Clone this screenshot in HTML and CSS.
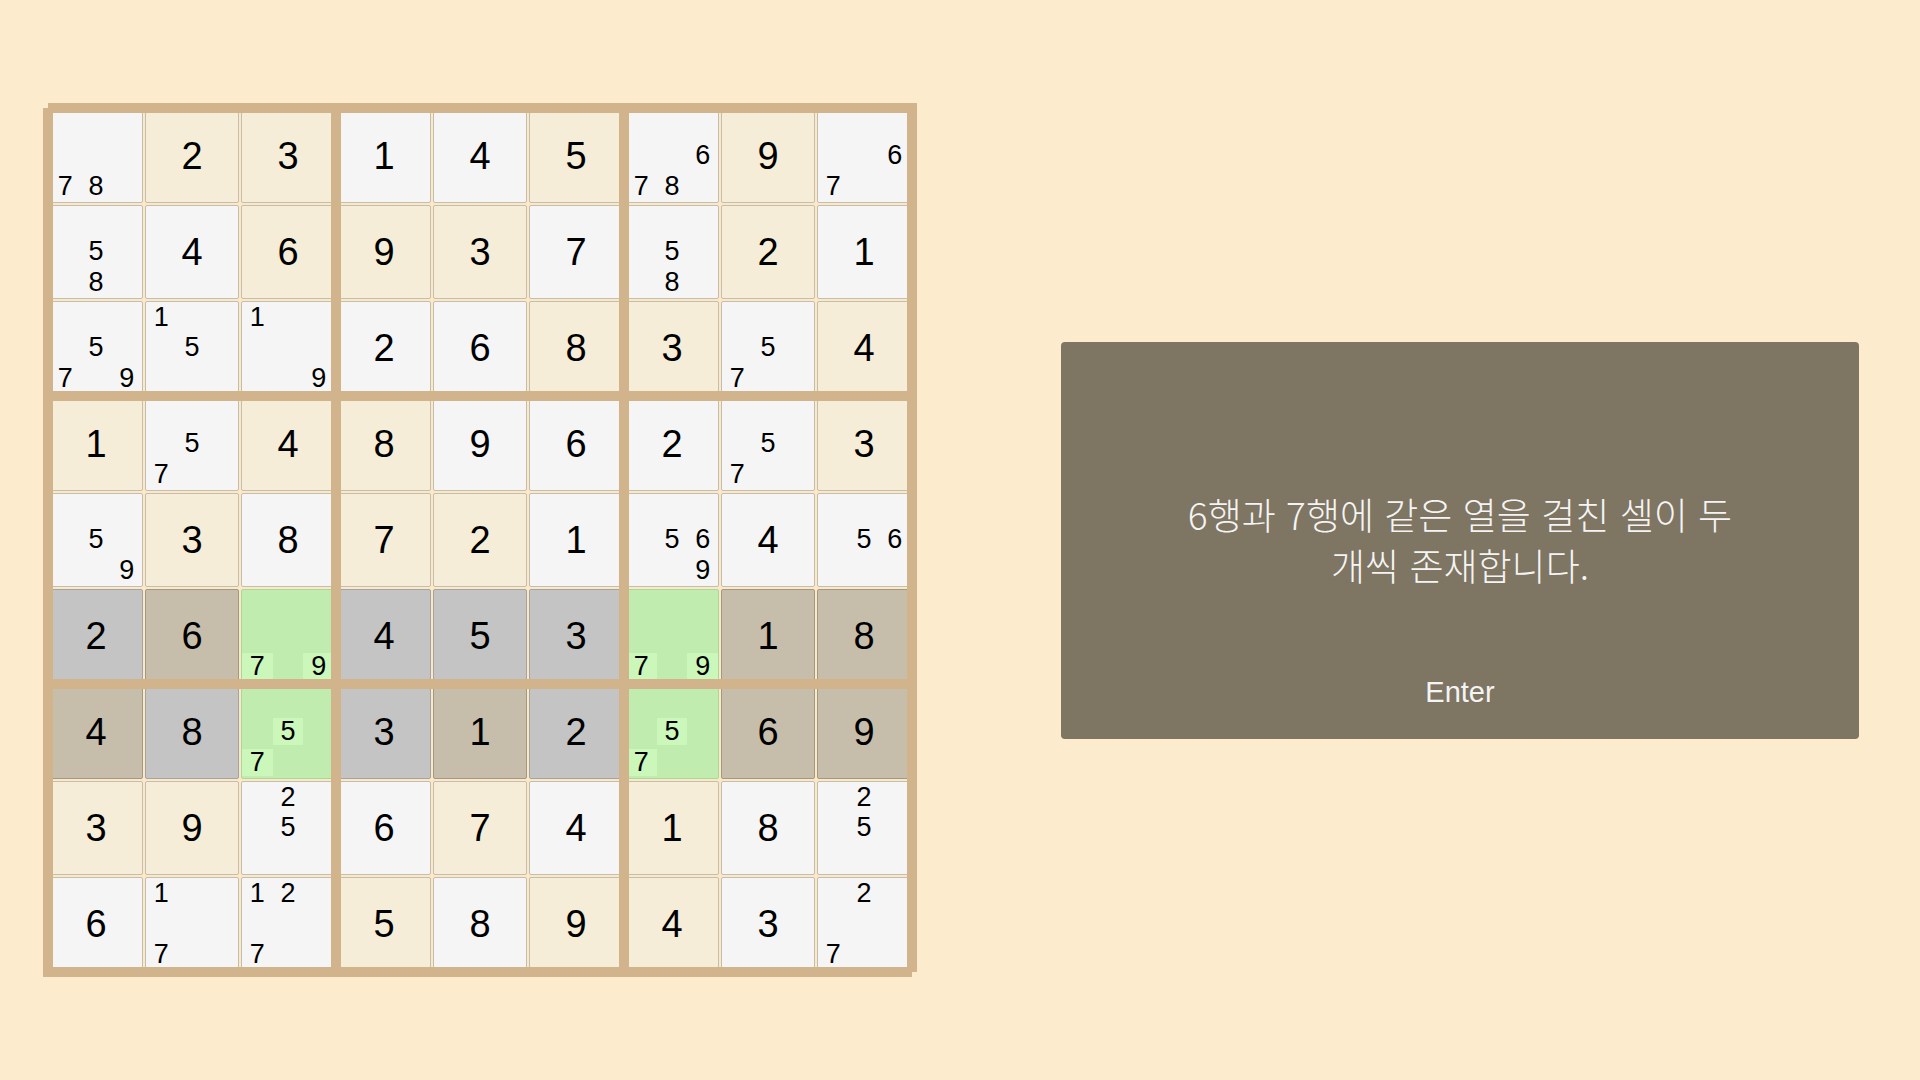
FILE: index.html
```html
<!DOCTYPE html>
<html lang="ko">
<head>
<meta charset="utf-8">
<title>Sudoku</title>
<link rel="stylesheet" href="styles.css">
</head>
<body>
<main class="page">
  <section class="board-area">
    <div class="board">
      <!-- row 1 -->
      <div class="cell w notes"><span class="n7">7</span><span class="n8">8</span></div>
      <div class="cell c">2</div>
      <div class="cell c">3</div>
      <div class="cell w">1</div>
      <div class="cell w">4</div>
      <div class="cell c">5</div>
      <div class="cell w notes"><span class="n6">6</span><span class="n7">7</span><span class="n8">8</span></div>
      <div class="cell c">9</div>
      <div class="cell w notes"><span class="n6">6</span><span class="n7">7</span></div>
      <!-- row 2 -->
      <div class="cell w notes"><span class="n5">5</span><span class="n8">8</span></div>
      <div class="cell w">4</div>
      <div class="cell c">6</div>
      <div class="cell c">9</div>
      <div class="cell c">3</div>
      <div class="cell w">7</div>
      <div class="cell w notes"><span class="n5">5</span><span class="n8">8</span></div>
      <div class="cell c">2</div>
      <div class="cell w">1</div>
      <!-- row 3 -->
      <div class="cell w notes"><span class="n5">5</span><span class="n7">7</span><span class="n9">9</span></div>
      <div class="cell w notes"><span class="n1">1</span><span class="n5">5</span></div>
      <div class="cell w notes"><span class="n1">1</span><span class="n9">9</span></div>
      <div class="cell w">2</div>
      <div class="cell w">6</div>
      <div class="cell c">8</div>
      <div class="cell c">3</div>
      <div class="cell w notes"><span class="n5">5</span><span class="n7">7</span></div>
      <div class="cell c">4</div>
      <!-- row 4 -->
      <div class="cell c">1</div>
      <div class="cell w notes"><span class="n5">5</span><span class="n7">7</span></div>
      <div class="cell c">4</div>
      <div class="cell c">8</div>
      <div class="cell w">9</div>
      <div class="cell w">6</div>
      <div class="cell w">2</div>
      <div class="cell w notes"><span class="n5">5</span><span class="n7">7</span></div>
      <div class="cell c">3</div>
      <!-- row 5 -->
      <div class="cell w notes"><span class="n5">5</span><span class="n9">9</span></div>
      <div class="cell c">3</div>
      <div class="cell w">8</div>
      <div class="cell c">7</div>
      <div class="cell c">2</div>
      <div class="cell w">1</div>
      <div class="cell w notes"><span class="n5">5</span><span class="n6">6</span><span class="n9">9</span></div>
      <div class="cell w">4</div>
      <div class="cell w notes"><span class="n5">5</span><span class="n6">6</span></div>
      <!-- row 6 -->
      <div class="cell g">2</div>
      <div class="cell t">6</div>
      <div class="cell hl notes"><span class="n7 on">7</span><span class="n9 on">9</span></div>
      <div class="cell g">4</div>
      <div class="cell g">5</div>
      <div class="cell g">3</div>
      <div class="cell hl notes"><span class="n7 on">7</span><span class="n9 on">9</span></div>
      <div class="cell t">1</div>
      <div class="cell t">8</div>
      <!-- row 7 -->
      <div class="cell t">4</div>
      <div class="cell g">8</div>
      <div class="cell hl notes"><span class="n5 on">5</span><span class="n7 on">7</span></div>
      <div class="cell g">3</div>
      <div class="cell t">1</div>
      <div class="cell g">2</div>
      <div class="cell hl notes"><span class="n5 on">5</span><span class="n7 on">7</span></div>
      <div class="cell t">6</div>
      <div class="cell t">9</div>
      <!-- row 8 -->
      <div class="cell c">3</div>
      <div class="cell c">9</div>
      <div class="cell w notes"><span class="n2">2</span><span class="n5">5</span></div>
      <div class="cell w">6</div>
      <div class="cell c">7</div>
      <div class="cell w">4</div>
      <div class="cell c">1</div>
      <div class="cell w">8</div>
      <div class="cell w notes"><span class="n2">2</span><span class="n5">5</span></div>
      <!-- row 9 -->
      <div class="cell w">6</div>
      <div class="cell w notes"><span class="n1">1</span><span class="n7">7</span></div>
      <div class="cell w notes"><span class="n1">1</span><span class="n2">2</span><span class="n7">7</span></div>
      <div class="cell c">5</div>
      <div class="cell w">8</div>
      <div class="cell c">9</div>
      <div class="cell c">4</div>
      <div class="cell w">3</div>
      <div class="cell w notes"><span class="n2">2</span><span class="n7">7</span></div>

      <!-- box lines drawn over the cells -->
      <div class="line h top"></div>
      <div class="line h mid1"></div>
      <div class="line h mid2"></div>
      <div class="line h bottom"></div>
      <div class="line v left"></div>
      <div class="line v mid1"></div>
      <div class="line v mid2"></div>
      <div class="line v right"></div>
    </div>
  </section>
  <section class="side">
    <div class="panel">
      <p class="message">6행과 7행에 같은 열을 걸친 셀이 두 개씩 존재합니다.</p>
      <p class="enter">Enter</p>
    </div>
  </section>
</main>
</body>
</html>
```

FILE: styles.css
```css
html, body {
  margin: 0;
  padding: 0;
}

body {
  background: #fdebcd;
  font-family: "Liberation Sans", Arial, sans-serif;
  color: #000;
}

.page {
  display: flex;
  width: 1920px;
  height: 1080px;
}

.board-area {
  width: 960px;
  display: flex;
  align-items: center;
  justify-content: center;
}

.board {
  position: relative;
  display: grid;
  grid-template-columns: repeat(9, 94px);
  grid-template-rows: repeat(9, 94px);
  gap: 2px;
  padding: 1px;
  background: #fde8c6;
}

.cell {
  box-sizing: border-box;
  border: 1px solid #c4bdb2;
  border-radius: 2px;
  display: flex;
  align-items: center;
  justify-content: center;
  font-size: 38px;
  line-height: 1;
}

.cell.w { background: #f5f5f5; }
.cell.c { background: #f5edd7; }
.cell.g { background: #c4c4c4; border-color: #a3a3a3; }
.cell.t { background: #c6bdaa; border-color: #a19885; }
.cell.hl { background: #c0ecb0; border-color: #a9d89a; }

.cell.notes {
  display: grid;
  grid-template-columns: repeat(3, 1fr);
  grid-template-rows: repeat(3, 1fr);
  font-size: 27px;
}

.notes span {
  display: flex;
  align-items: center;
  justify-content: center;
}

.notes span.on {
  background: #cbf7ba;
}

.n1 { grid-row: 1; grid-column: 1; }
.n2 { grid-row: 1; grid-column: 2; }
.n3 { grid-row: 1; grid-column: 3; }
.n4 { grid-row: 2; grid-column: 1; }
.n5 { grid-row: 2; grid-column: 2; }
.n6 { grid-row: 2; grid-column: 3; }
.n7 { grid-row: 3; grid-column: 1; }
.n8 { grid-row: 3; grid-column: 2; }
.n9 { grid-row: 3; grid-column: 3; }

.line {
  position: absolute;
  background: #d2b48c;
}

.line.h { height: 10px; }
.line.v { width: 10px; }

.line.h.top    { top: -5px;  left: 0;    width: 869px; }
.line.h.mid1   { top: 283px; left: 0;    width: 864px; }
.line.h.mid2   { top: 571px; left: 0;    width: 864px; }
.line.h.bottom { top: 859px; left: -5px; width: 869px; }

.line.v.left   { left: -5px;  top: 0;    height: 869px; }
.line.v.mid1   { left: 283px; top: 0;    height: 864px; }
.line.v.mid2   { left: 571px; top: 0;    height: 864px; }
.line.v.right  { left: 859px; top: -5px; height: 869px; }

.side {
  flex: 1;
  display: flex;
  align-items: center;
}

.panel {
  margin-left: 101px;
  width: 798px;
  height: 397px;
  background: #7e7563;
  border-radius: 4px;
  display: grid;
  grid-template-rows: 1fr auto 1fr;
  justify-items: center;
  color: #f4f4f4;
}

.message {
  grid-row: 2;
  margin: 0;
  max-width: 570px;
  text-align: center;
  font-family: "Noto Sans CJK KR", "Liberation Sans", sans-serif;
  font-weight: 300;
  font-size: 37px;
  line-height: 51px;
}

.enter {
  grid-row: 3;
  align-self: end;
  margin: 0 0 30px;
  font-family: "Liberation Sans", Arial, sans-serif;
  font-size: 29px;
  line-height: 34px;
}
```
